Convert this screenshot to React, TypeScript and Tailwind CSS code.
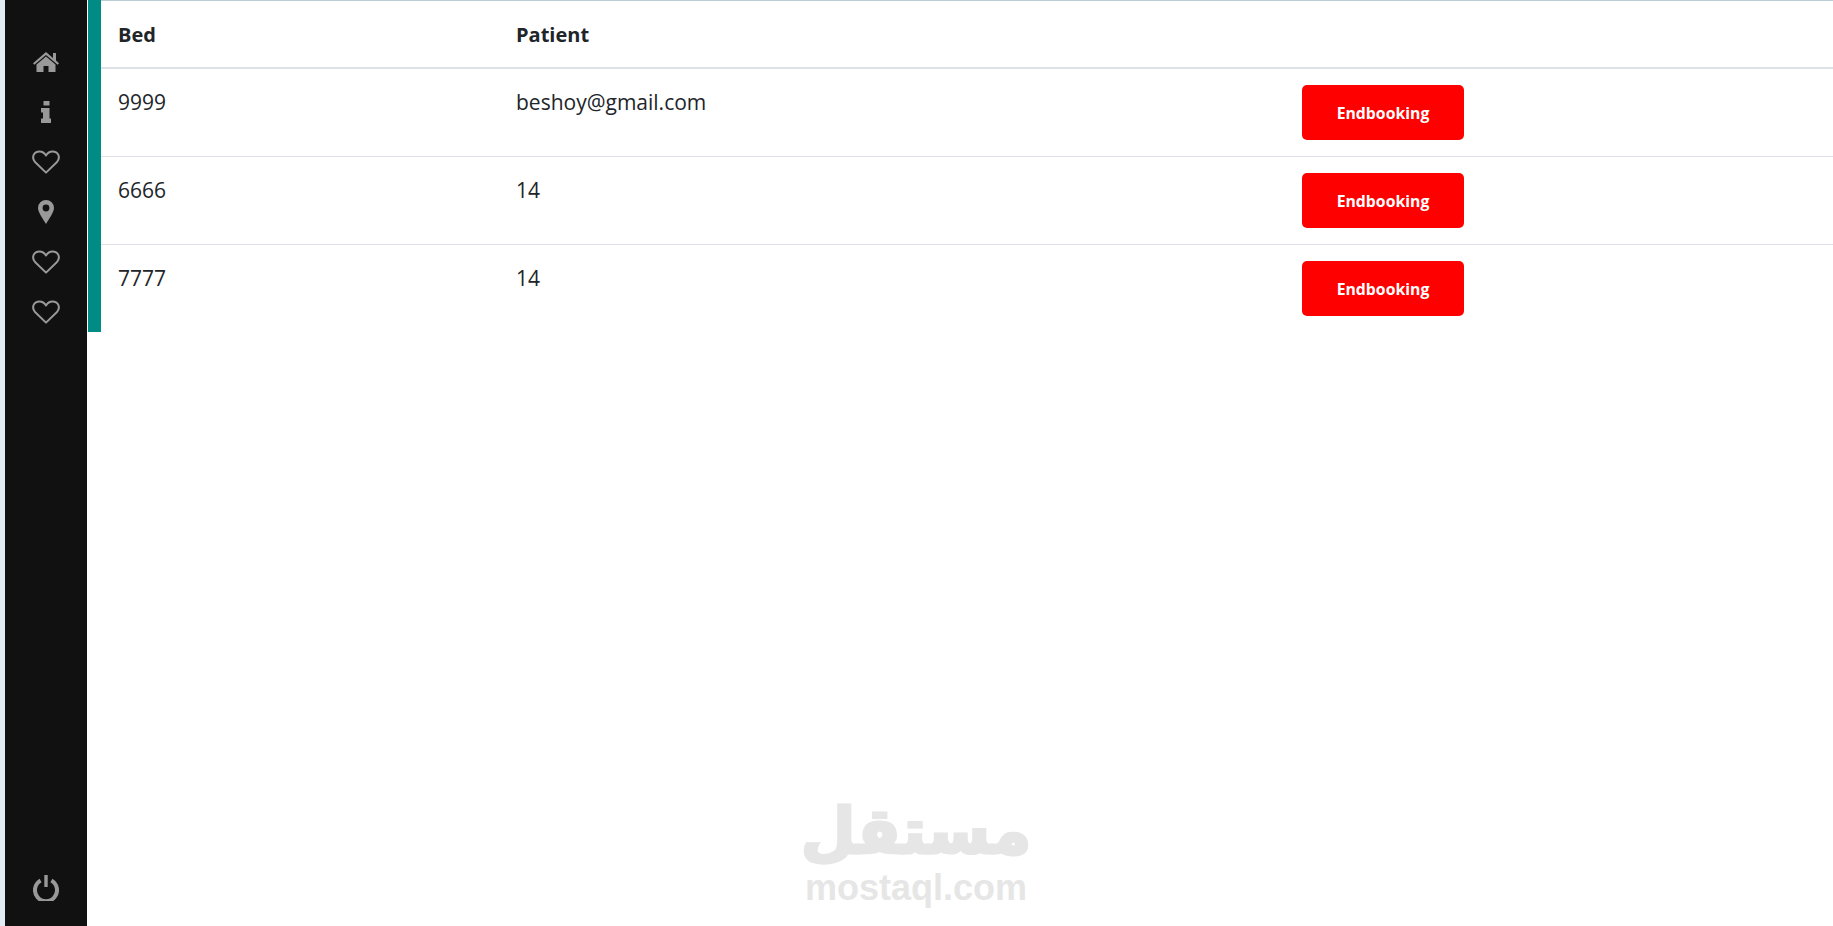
const rows = [
  ["9999", "beshoy@gmail.com"],
  ["6666", "14"],
  ["7777", "14"],
];

function Heart() {
  return (
    <svg width="28" height="24" viewBox="0 0 28 24" fill="none" stroke="currentColor" strokeWidth="2" strokeLinejoin="round">
      <path d="M14 22.6 L3 12 C-1 7 2 1.5 7.5 1.5 C10.5 1.5 12.5 3 14 5.5 C15.5 3 17.5 1.5 20.5 1.5 C26 1.5 29 7 25 12 Z" />
    </svg>
  );
}

function Home() {
  return (
    <svg width="26" height="20" viewBox="0 0 26 20" fill="currentColor">
      <path d="M13 0 L20 6 V1 H23 V8.6 L26 11.2 L24.6 12.7 L13 3 L1.4 12.7 L0 11.2 Z" />
      <path d="M13 4.6 L22.5 12.6 V20 H15.5 V14 H10.5 V20 H3.5 V12.6 Z" />
    </svg>
  );
}

function Info() {
  return (
    <svg width="10" height="22" viewBox="0 0 10 22" fill="currentColor">
      <path d="M2.5 0h6v4.5h-6z" />
      <path d="M0 7h8.5v10.5H10V22H0v-4.5h2V11.5H0z" />
    </svg>
  );
}

function Pin() {
  return (
    <svg width="16" height="24" viewBox="0 0 16 24" fill="currentColor" fillRule="evenodd">
      <path d="M8 0a8 8 0 0 1 8 8c0 4-5 11-8 16C5 19 0 12 0 8a8 8 0 0 1 8-8zM8 4.6a3.4 3.4 0 1 0 0 6.8a3.4 3.4 0 0 0 0-6.8z" />
    </svg>
  );
}

function Power() {
  return (
    <svg width="26" height="26" viewBox="0 0 26 26" fill="none" stroke="currentColor" strokeWidth="4">
      <path d="M7.6 5.6 A11 11 0 1 0 18.4 5.6" />
      <path d="M13 0 V12" strokeWidth="3.4" />
    </svg>
  );
}

export default function App() {
  return (
    <div className="relative flex h-[926px] w-[1833px] overflow-hidden bg-white font-['Open_Sans','Noto_Sans',sans-serif]">
      <div className="w-[5px] shrink-0 bg-[#e3ebf5]" />
      <aside className="flex w-[82px] shrink-0 flex-col items-center bg-[#111111] pt-[37px] pb-[13px] text-[#999999]">
        <div className="flex h-[50px] items-center"><Home /></div>
        <div className="flex h-[50px] items-center"><Info /></div>
        <div className="flex h-[50px] items-center"><Heart /></div>
        <div className="flex h-[50px] items-center"><Pin /></div>
        <div className="flex h-[50px] items-center"><Heart /></div>
        <div className="flex h-[50px] items-center"><Heart /></div>
        <div className="mt-auto flex h-[50px] items-center"><Power /></div>
      </aside>
      <main className="min-w-0 flex-1 pl-px">
        <div className="border-l-[13px] border-l-[#008c85]">
          <table className="w-full table-fixed border-collapse text-left text-[#212529]">
            <colgroup>
              <col className="w-[398px]" />
              <col className="w-[787px]" />
              <col />
            </colgroup>
            <thead>
              <tr className="border-t border-b-2 border-t-[#b9cbd3] border-b-[#dee2e6]">
                <th className="h-[67px] pt-[3px] pr-4 pl-[17px] text-[20px] leading-[30px] font-bold">Bed</th>
                <th className="pt-[3px] pr-4 pl-[17px] text-[20px] leading-[30px] font-bold">Patient</th>
                <th className="px-4" />
              </tr>
            </thead>
            <tbody>
              {rows.map(([bed, patient]) => (
                <tr key={bed} className="border-b border-[#dee2e6] last:border-b-0">
                  <td className="pt-[18px] pr-4 pb-4 pl-[17px] align-top text-[21px] leading-[30px]">{bed}</td>
                  <td className="pt-[18px] pr-4 pb-4 pl-[17px] align-top text-[21px] leading-[30px]">{patient}</td>
                  <td className="p-4 align-top">
                    <button className="block h-[55px] w-[162px] rounded-[5px] bg-[#ff0000] pt-[3px] text-[15.8px] font-bold text-white">
                      Endbooking
                    </button>
                  </td>
                </tr>
              ))}
            </tbody>
          </table>
        </div>
      </main>
      <div className="absolute top-[794px] left-[800px] flex w-[232px] flex-col items-center text-[#e6e6e6]">
        <div className="font-['DejaVu_Sans',sans-serif] text-[63px] leading-[75px] font-bold [-webkit-text-stroke:3px_#e6e6e6]" dir="rtl">مستقل</div>
        <div className="font-['Liberation_Sans',sans-serif] text-[36px] leading-[38px] font-bold">mostaql.com</div>
      </div>
    </div>
  );
}
